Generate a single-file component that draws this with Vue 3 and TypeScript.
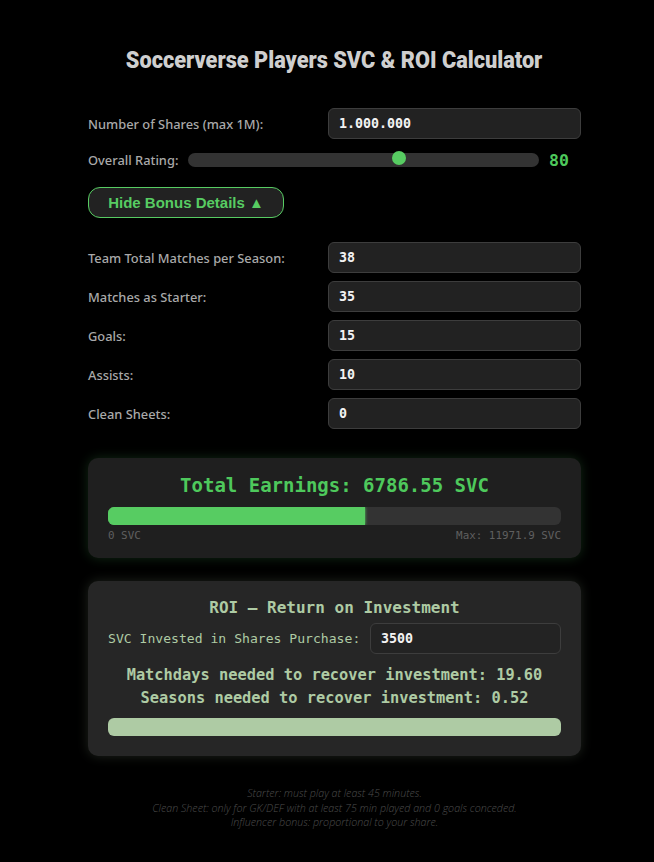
<script setup lang="ts">
const rows: { label: string; value: string }[] = [
  { label: 'Team Total Matches per Season:', value: '38' },
  { label: 'Matches as Starter:', value: '35' },
  { label: 'Goals:', value: '15' },
  { label: 'Assists:', value: '10' },
  { label: 'Clean Sheets:', value: '0' },
]
</script>

<template>
  <main class="page">
    <h1 class="title"><span class="title-text">Soccerverse Players SVC &amp; ROI Calculator</span></h1>

    <div class="row first">
      <label class="label">Number of Shares (max 1M):</label>
      <div class="input">1.000.000</div>
    </div>

    <div class="rating">
      <span class="label rating-label">Overall Rating:</span>
      <div class="slider"><span class="thumb"></span></div>
      <span class="rating-value">80</span>
    </div>

    <button class="toggle">Hide Bonus Details ▲</button>

    <div class="bonus">
      <div v-for="r in rows" :key="r.label" class="row">
        <label class="label">{{ r.label }}</label>
        <div class="input">{{ r.value }}</div>
      </div>
    </div>

    <section class="card earnings">
      <div class="earn-title">Total Earnings: 6786.55 SVC</div>
      <div class="bar"><div class="bar-fill"></div></div>
      <div class="bar-labels"><span>0 SVC</span><span>Max: 11971.9 SVC</span></div>
    </section>

    <section class="card roi">
      <div class="roi-title">ROI – Return on Investment</div>
      <div class="roi-row">
        <label class="roi-label">SVC Invested in Shares Purchase:</label>
        <div class="input roi-input">3500</div>
      </div>
      <div class="roi-line first-line">Matchdays needed to recover investment: 19.60</div>
      <div class="roi-line">Seasons needed to recover investment: 0.52</div>
      <div class="roi-bar"></div>
    </section>

    <footer class="notes">
      <div>Starter: must play at least 45 minutes.</div>
      <div>Clean Sheet: only for GK/DEF with at least 75 min played and 0 goals conceded.</div>
      <div>Influencer bonus: proportional to your share.</div>
    </footer>
  </main>
</template>

<style>
html, body { background: #000; margin: 0; }
</style>

<style scoped>
.page {
  box-sizing: border-box;
  width: 654px;
  height: 862px;
  padding: 46px 73px 0 88px;
  background: #000;
  font-family: "Noto Sans", "Open Sans", sans-serif;
  overflow: hidden;
}
.title {
  margin: 0 0 33px;
  height: 29px;
  font-family: Roboto, sans-serif;
  font-weight: 900;
  font-size: 24px;
  line-height: 29px;
  text-align: center;
  color: #cfcfcf;
  white-space: nowrap;
}
.title-text {
  display: inline-block;
  transform: scaleX(0.905);
}
.row {
  display: flex;
  align-items: center;
  height: 31px;
  margin-bottom: 8px;
}
.label {
  width: 240px;
  font-size: 12.85px;
  font-weight: 500;
  color: #a9a9a9;
  white-space: nowrap;
}
.input {
  box-sizing: border-box;
  flex: 1;
  height: 31px;
  padding: 0 10px;
  background: #222;
  border: 1px solid #3d3d3d;
  border-radius: 6px;
  font-family: "DejaVu Sans Mono", monospace;
  font-size: 13.3px;
  font-weight: 700;
  line-height: 29px;
  color: #f2f2f2;
}
.rating {
  display: flex;
  align-items: center;
  height: 26px;
  margin-top: 1px;
}
.rating-label { width: 100px; }
.slider {
  position: relative;
  width: 351px;
  height: 14px;
  background: #333;
  border-radius: 7px;
}
.thumb {
  position: absolute;
  left: 204px;
  top: -2px;
  width: 14px;
  height: 14px;
  border-radius: 50%;
  background: #57cc62;
}
.rating-value {
  margin-left: 10px;
  font-family: "DejaVu Sans Mono", monospace;
  font-size: 16.5px;
  font-weight: 700;
  color: #4ec95c;
}
.toggle {
  display: block;
  box-sizing: border-box;
  width: 196px;
  height: 31px;
  margin: 14px 0 24px;
  padding: 0;
  background: #222;
  border: 1px solid #57cc62;
  border-radius: 12px;
  font-family: "Liberation Sans", Arial, sans-serif;
  font-size: 15px;
  font-weight: 700;
  color: #57cc62;
}
.bonus { margin-bottom: 29px; }
.card {
  box-sizing: border-box;
  border-radius: 10px;
}
.earnings {
  height: 100px;
  margin-bottom: 23px;
  padding: 14px 20px 0;
  background: #1f1f1f;
  box-shadow: 0 0 12px rgba(87, 204, 98, 0.2);
}
.earn-title {
  height: 26px;
  font-family: "DejaVu Sans Mono", monospace;
  font-size: 19px;
  font-weight: 700;
  line-height: 26px;
  text-align: center;
  color: #4ec95c;
}
.bar {
  height: 18px;
  margin-top: 9px;
  background: #333;
  border-radius: 6px;
  overflow: hidden;
}
.bar-fill {
  width: 56.7%;
  height: 100%;
  background: #57cc62;
  box-shadow: 0 0 3px #57cc62;
}
.bar-labels {
  display: flex;
  justify-content: space-between;
  margin-top: 3px;
  font-family: "DejaVu Sans Mono", monospace;
  font-size: 10.9px;
  line-height: 15px;
  color: #5f5f5f;
}
.roi {
  height: 175px;
  padding: 16px 20px 0;
  background: #262626;
  box-shadow: 0 0 12px rgba(174, 201, 162, 0.18);
}
.roi-title {
  height: 22px;
  font-family: "DejaVu Sans Mono", monospace;
  font-size: 16px;
  font-weight: 700;
  line-height: 22px;
  text-align: center;
  color: #aecba4;
}
.roi-row {
  display: flex;
  align-items: center;
  margin-top: 4px;
}
.roi-label {
  width: 262px;
  font-family: "DejaVu Sans Mono", monospace;
  font-size: 13.1px;
  font-weight: 500;
  color: #aecba4;
  white-space: nowrap;
}
.roi-input { background: #232323; }
.roi-line {
  height: 23px;
  font-family: "DejaVu Sans Mono", monospace;
  font-size: 15.35px;
  font-weight: 700;
  line-height: 23px;
  text-align: center;
  color: #aecba4;
  white-space: nowrap;
}
.first-line { margin-top: 10px; }
.roi-bar {
  height: 18px;
  margin-top: 8px;
  border-radius: 6px;
  background: #aecba4;
}
.notes {
  margin-top: 30px;
  font-family: "Open Sans", sans-serif;
  font-size: 10.7px;
  font-weight: 300;
  font-style: italic;
  line-height: 14.5px;
  text-align: center;
  color: #4d4d4d;
}
</style>
